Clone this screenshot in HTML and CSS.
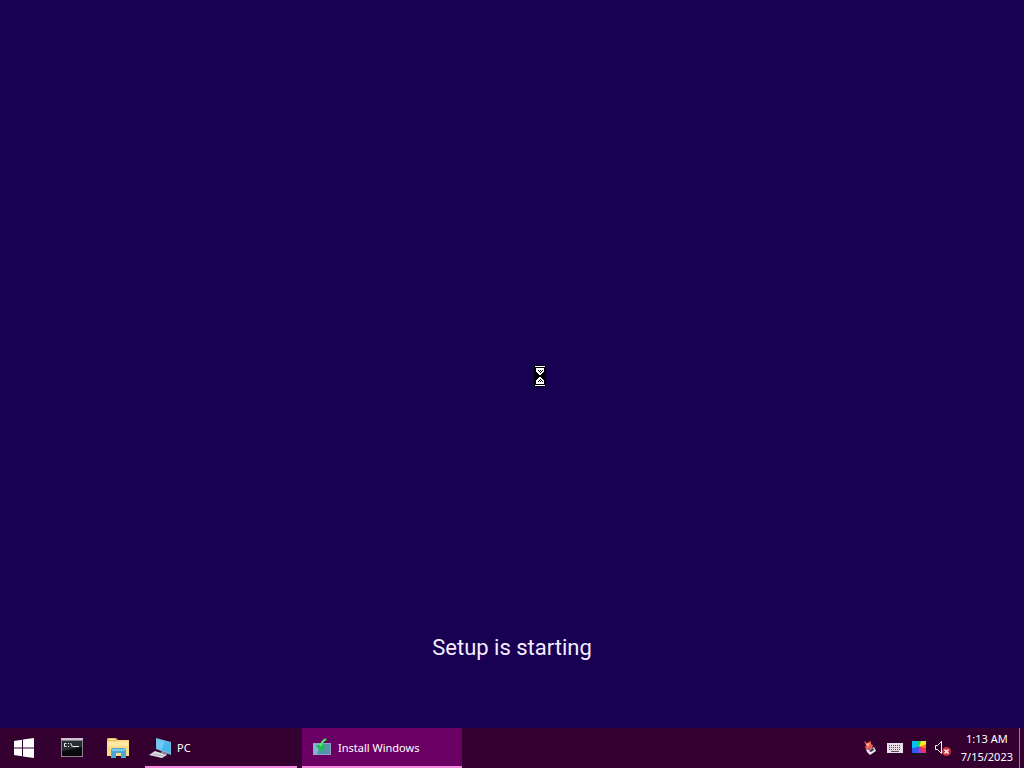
FILE: index.html
```html
<!DOCTYPE html>
<html lang="en">
<head>
<meta charset="utf-8">
<meta name="viewport" content="width=device-width, initial-scale=1">
<title>Install Windows</title>
<link rel="stylesheet" href="styles.css">
</head>
<body>
<div class="desktop">
  <main class="setup">
    <p class="setup-status" role="status">Setup is starting</p>
    <svg class="cursor" width="12" height="22" viewBox="0 0 12 22" shape-rendering="crispEdges" aria-hidden="true">
      <path fill="#000" d="M0 0h12v22H0z"/>
      <path fill="#fff" d="M1 1h10v1H1zM1 20h10v1H1zM2 3h8v4H9v1H8v1H7v1H6v2h1v1h1v1h1v1h1v4H2v-4h1v-1h1v-1h1v-1h1v-2H5V9H4V8H3V7H2z"/>
      <path fill="#000" d="M4 5h1v1H4zM6 5h1v1H6zM8 5h1v1H8zM5 6h1v1H5zM7 6h1v1H7zM6 7h1v1H6zM6 14h1v1H6zM5 15h1v1H5zM7 15h1v1H7zM4 16h1v1H4zM6 16h1v1H6zM8 16h1v1H8z"/>
    </svg>
  </main>
  <footer class="taskbar">
    <button class="launcher" type="button" aria-label="Start">
      <svg width="20" height="20" viewBox="0 0 20 20" aria-hidden="true"><path fill="#fff" d="M0 3l8-1.2v7.7H0zM9 1.6L20 0v9.5H9zM0 10.5h8v7.7L0 17zM9 10.5h11V20L9 18.4z"/></svg>
    </button>
    <button class="launcher" type="button" aria-label="Command Prompt">
      <svg width="24" height="20" viewBox="0 0 24 20" aria-hidden="true">
        <path fill="#8a818e" d="M1 0h22v19H1z"/><path fill="#d0c2d4" d="M1 0h22v2H1z"/>
        <path fill="#080a0c" d="M2 3h20v15H2z"/><path fill="#293034" d="M2 3h20v6L2 13z"/>
        <path fill="none" stroke="#eee" d="M6.5 5.5h-2v3h2M8.5 5v1M8.5 8v1M10.5 5l2 4M13 8.5h6"/>
      </svg>
    </button>
    <button class="launcher launcher-files" type="button" aria-label="File Explorer">
      <svg width="24" height="22" viewBox="0 0 24 22" aria-hidden="true">
        <path fill="#e8b95d" d="M1 2l1-1h8l2 2h10v5H1z"/><path fill="#fff0b0" d="M3 2h6v1H3z"/>
        <path fill="#f9dc83" d="M1 4h10l1-1h11v16H1z"/><path fill="#ffe9a4" d="M2 5h20v4H2z"/>
        <path fill="#47a7d8" d="M5 12l2-1h11l2 1v9h-5v-5h-5v5H5z"/><path fill="#79c9ec" d="M6 12h13v2H6z"/>
      </svg>
    </button>
    <button class="task" type="button">
      <svg width="24" height="22" viewBox="0 0 24 22" aria-hidden="true">
        <path fill="#79b9de" d="M7 1l15 4v13L7 12z"/><path fill="#48b7ee" d="M8 2l13 4v10L8 11z"/>
        <path fill="#6bcaf6" d="M8 2l8 3-4 8-4-2z"/><path fill="#8c8790" d="M12 14l6 2v2l-6-2z"/>
        <path fill="#dddde3" d="M6 14l12 4-5 3-13-3z"/><path stroke="#b0aeb8" d="M4 17l11 2"/>
      </svg>
      <span>PC</span>
    </button>
    <button class="task task-active" type="button">
      <svg width="20" height="20" viewBox="0 0 20 20" aria-hidden="true">
        <path fill="#8fa5bc" d="M1 5h18v12H1z"/><path fill="#5792b3" d="M2 6h16v10H2z"/>
        <path fill="#82b7d3" d="M2 6h7l-4 10H2z"/><path fill="#26bd50" d="M5 7h3C9 4 11 1 14 0l1 2c-3 1-4 3-4 6h3l-5 6-5-6z"/>
        <path fill="#62ee77" d="M8 8c0-3 2-6 5-7l1 1c-3 1-4 3-4 6z"/>
      </svg>
      <span>Install Windows</span>
    </button>
    <div class="tray">
      <button class="tray-item" type="button" aria-label="Removable device">
        <svg width="16" height="16" viewBox="0 0 16 16" aria-hidden="true">
          <path fill="#e85f53" d="M1 1l3 2 4-2v3l2 1-1 3-4 2-3-2 1-3z"/><path fill="#ffb09d" d="M3 4l4-1-2 4z"/>
          <path fill="#eee5ee" d="M3 9l3 1 5-3 2 4-6 4-3-3z"/><path fill="#38303c" d="M6 11l4-3 1 2-3 2z"/>
        </svg>
      </button>
      <button class="tray-item" type="button" aria-label="Touch keyboard">
        <svg width="16" height="16" viewBox="0 0 16 16" aria-hidden="true">
          <path fill="#e8dfe8" d="M0 3h16v10H0z"/><path stroke="#5f4861" stroke-dasharray="1 1" d="M2 5.5h12M2 7.5h12M2 9.5h12"/><path stroke="#5f4861" d="M4 11.5h8"/>
        </svg>
      </button>
      <button class="tray-item" type="button" aria-label="Display settings">
        <svg width="16" height="16" viewBox="0 0 16 16" aria-hidden="true">
          <path fill="#101820" d="M1 13h14v2H1z"/><path fill="#08bdf3" d="M1 1h7v6L1 9z"/><path fill="#16d760" d="M5 1h6L8 7z"/>
          <path fill="#ffed20" d="M10 1h5v4L8 7z"/><path fill="#ff8627" d="M15 4v5L8 7z"/><path fill="#f03355" d="M15 8v5h-4L8 7z"/>
          <path fill="#a63bed" d="M12 13H6l2-6z"/><path fill="#315af0" d="M7 13H1V8l7-1z"/>
        </svg>
      </button>
      <button class="tray-item" type="button" aria-label="Volume: muted">
        <svg width="16" height="16" viewBox="0 0 16 16" aria-hidden="true">
          <path fill="none" stroke="#fff" d="M.5 5.5h2l4-4v12l-4-4h-2z"/><circle cx="11.5" cy="11.5" r="4.5" fill="#c9333b"/><path stroke="#fff" stroke-width="1.4" d="M9.5 9.5l4 4M13.5 9.5l-4 4"/>
        </svg>
      </button>
      <button class="clock" type="button"><time datetime="2023-07-15T01:13">1:13 AM<br>7/15/2023</time></button>
      <button class="show-desktop" type="button" aria-label="Show desktop"></button>
    </div>
  </footer>
</div>
</body>
</html>
```
FILE: styles.css
```css
* { box-sizing: border-box; }

body {
  margin: 0;
  background: #180052;
  color: #fff;
  font: 11px/18px "Noto Sans", sans-serif;
}

button {
  border: 0;
  padding: 0;
  background: transparent;
  color: inherit;
  font: inherit;
}

svg { display: block; flex: none; }

.desktop {
  display: flex;
  flex-direction: column;
  min-height: 100vh;
}

.setup {
  position: relative;
  display: flex;
  flex: 1;
  align-items: flex-end;
  justify-content: center;
  padding-bottom: 60px;
}

.setup-status {
  margin: 0;
  color: #f5edff;
  font-family: Roboto, sans-serif;
  font-size: 22px;
  line-height: 40px;
}

.cursor {
  position: absolute;
  top: 365px;
  left: 534px;
}

.taskbar {
  display: flex;
  height: 40px;
  background: #330030;
}

.launcher {
  display: flex;
  align-items: center;
  justify-content: center;
  width: 48px;
}

.launcher-files { width: 44px; }

.task {
  display: flex;
  align-items: center;
  gap: 4px;
  width: 152px;
  margin-left: 5px;
  padding: 2px 4px 0;
  border-bottom: 2px solid #f58be0;
}

.task-active {
  gap: 6px;
  width: 160px;
  padding-left: 10px;
  background: #6b0064;
}

.tray {
  display: flex;
  align-items: center;
  gap: 8px;
  margin-left: auto;
}

.tray-item {
  display: flex;
  align-items: center;
}

.clock {
  margin-left: 2px;
  text-align: center;
}

.show-desktop {
  align-self: stretch;
  width: 5px;
  margin-left: -2px;
  border-left: 1px solid #a47aa4;
}
```
